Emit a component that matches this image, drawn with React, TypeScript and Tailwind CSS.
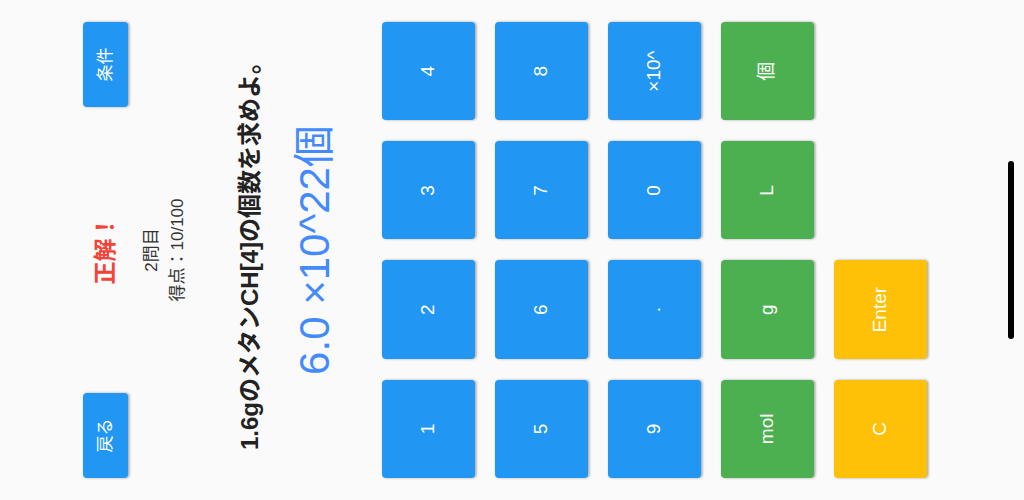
import React from "react"

type Key = { label: string; color: "blue" | "green" | "amber" } | null

const keys: Key[] = [
  { label: "1", color: "blue" },
  { label: "2", color: "blue" },
  { label: "3", color: "blue" },
  { label: "4", color: "blue" },
  { label: "5", color: "blue" },
  { label: "6", color: "blue" },
  { label: "7", color: "blue" },
  { label: "8", color: "blue" },
  { label: "9", color: "blue" },
  { label: ".", color: "blue" },
  { label: "0", color: "blue" },
  { label: "×10^", color: "blue" },
  { label: "mol", color: "green" },
  { label: "g", color: "green" },
  { label: "L", color: "green" },
  { label: "個", color: "green" },
  { label: "C", color: "amber" },
  { label: "Enter", color: "amber" },
  null,
  null,
]

const bg = {
  blue: "bg-[#2196f3]",
  green: "bg-[#4caf50]",
  amber: "bg-[#ffc107]",
}

const shadow = "shadow-[0_1px_3px_rgba(0,0,0,0.25),0_2px_2px_rgba(0,0,0,0.12)]"

function SmallButton({ children }: { children: React.ReactNode }) {
  return (
    <button className={`w-[85px] h-[45px] rounded bg-[#2196f3] text-white text-[17px] ${shadow}`}>
      {children}
    </button>
  )
}

export default function App() {
  return (
    <div className="w-[1024px] h-[500px] overflow-hidden bg-[#fafafa]" style={{ fontFamily: "'Liberation Sans', 'Noto Sans CJK JP', sans-serif" }}>
      {/* portrait screen, turned on its side */}
      <div className="w-[500px] h-[1024px] origin-top-left translate-y-[500px] -rotate-90 bg-[#fafafa] flex flex-col">
        <div className="mt-[83px] px-[22px] flex items-center justify-between">
          <SmallButton>戻る</SmallButton>
          <span className="text-[23px] font-bold text-[#f44336] leading-none">正解！</span>
          <SmallButton>条件</SmallButton>
        </div>
        <div className="mt-[11px] flex flex-col items-center text-[17px] leading-[26px] text-[#333]">
          <span>2問目</span>
          <span>得点：10/100</span>
        </div>
        <p className="mt-[44px] text-center text-[24px] leading-[30px] font-semibold text-[#222]">
          1.6gのメタンCH[4]の個数を求めよ。
        </p>
        <p className="mt-[26px] text-center text-[42px] leading-[48px] text-[#448aff]">
          6.0 ×10^22個
        </p>
        <div className="mt-[43px] px-[22px] grid grid-cols-4 gap-x-[21px] gap-y-[20px]">
          {keys.map((k, i) =>
            k ? (
              <button
                key={i}
                className={`h-[93px] rounded ${bg[k.color]} text-white text-[19px] ${shadow}`}
              >
                {k.label}
              </button>
            ) : (
              <div key={i} className="h-[93px]" />
            )
          )}
        </div>
        <div className="mt-[81px] mx-auto w-[178px] h-[6px] rounded-full bg-black" />
      </div>
    </div>
  )
}
